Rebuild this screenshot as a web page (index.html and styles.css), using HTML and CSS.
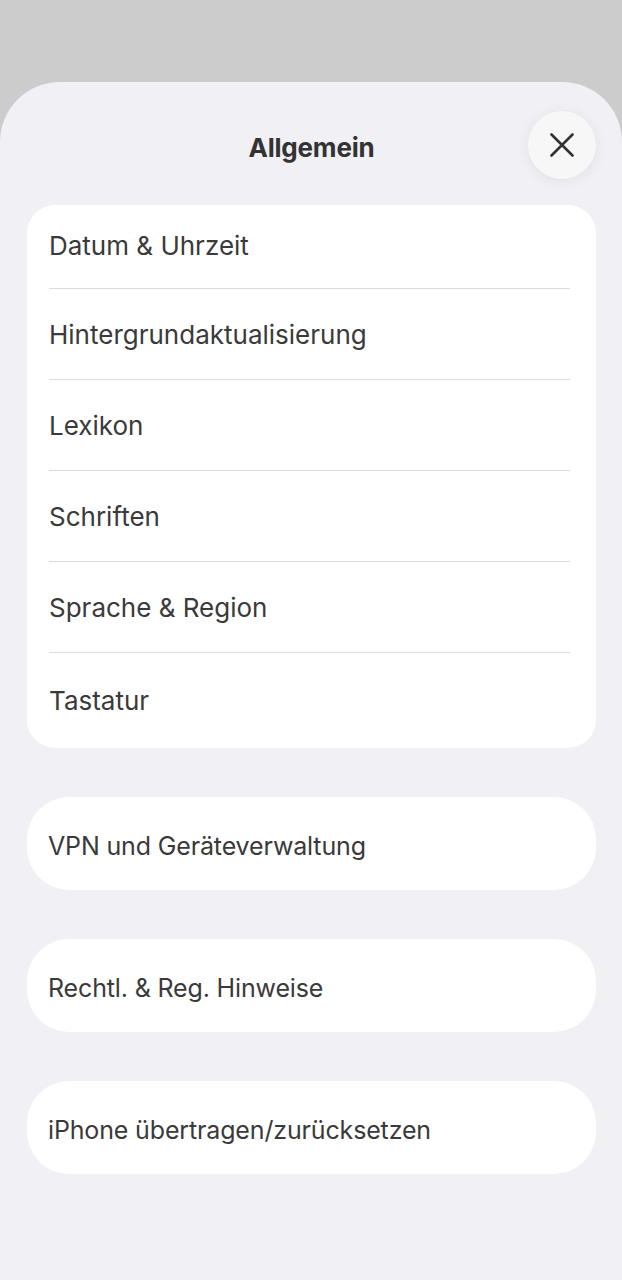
FILE: index.html
```html
<!DOCTYPE html>
<html lang="de">
<head>
    <meta charset="UTF-8">
    <meta name="viewport" content="width=device-width, initial-scale=1.0">
    <title>Allgemein</title>
    <link rel="stylesheet" href="styles.css">
</head>
<body>
    <div class="sheet">
        <!-- Kopfzeile -->
        <div class="header">
            <span></span>
            <h1 class="title">Allgemein</h1>
            <button class="close" aria-label="Schließen">
                <svg width="24" height="24" viewBox="0 0 24 24">
                    <path d="M1.5 1.5 L22.5 22.5 M22.5 1.5 L1.5 22.5" stroke="#333" stroke-width="2.6" stroke-linecap="round" fill="none"/>
                </svg>
            </button>
        </div>

        <div class="group">
            <div class="row first">Datum &amp; Uhrzeit</div>
            <div class="row">Hintergrundaktualisierung</div>
            <div class="row">Lexikon</div>
            <div class="row">Schriften</div>
            <div class="row">Sprache &amp; Region</div>
            <div class="row last">Tastatur</div>
        </div>

        <div class="group single">
            <div class="row">VPN und Geräteverwaltung</div>
        </div>

        <div class="group single">
            <div class="row">Rechtl. &amp; Reg. Hinweise</div>
        </div>

        <div class="group single">
            <div class="row">iPhone übertragen/zurücksetzen</div>
        </div>
    </div>
</body>
</html>
```

FILE: styles.css
```css
/* allgemeine Stile */
html, body {
    margin: 0;
    padding: 0;
    height: 100%;
}

body {
    background-color: #cccccc;
    font-family: Inter, "Noto Sans", sans-serif;
    color: #3a3a3a;
    overflow: hidden;
}

.sheet {
    margin-top: 82px;
    min-height: 1198px;
    box-sizing: border-box;
    background-color: #f0f0f5;
    border-radius: 60px 60px 0 0;
    padding: 29px 26px 0 27px;
    display: flex;
    flex-direction: column;
}

.header {
    display: grid;
    grid-template-columns: 68px 1fr 68px;
    align-items: center;
    height: 68px;
    margin-bottom: 26px;
}

.title {
    margin: 4px 0 0;
    text-align: center;
    font-size: 26px;
    font-weight: 700;
    letter-spacing: -0.2px;
    color: #333333;
}

.close {
    width: 68px;
    height: 68px;
    border-radius: 50%;
    border: none;
    padding: 0;
    background-color: #f7f7f7;
    box-shadow: 0 2px 14px rgba(0, 0, 0, 0.07);
    display: flex;
    align-items: center;
    justify-content: center;
    cursor: pointer;
}

.group {
    background-color: #ffffff;
    border-radius: 28px;
    margin-bottom: 49px;
}

.group.single {
    border-radius: 42px;
}

.row {
    height: 90px;
    display: flex;
    align-items: center;
    margin: 0 26px 0 22px;
    font-size: 26px;
    border-bottom: 1px solid #dcdcdf;
}

.row.first {
    height: 84px;
    padding-bottom: 3px;
    box-sizing: border-box;
}

.row.last {
    height: 95px;
    border-bottom: none;
}

.single .row {
    height: 93px;
    box-sizing: border-box;
    padding-top: 5px;
    border-bottom: none;
    margin-left: 21px;
    font-size: 25px;
    letter-spacing: -0.15px;
}
```
